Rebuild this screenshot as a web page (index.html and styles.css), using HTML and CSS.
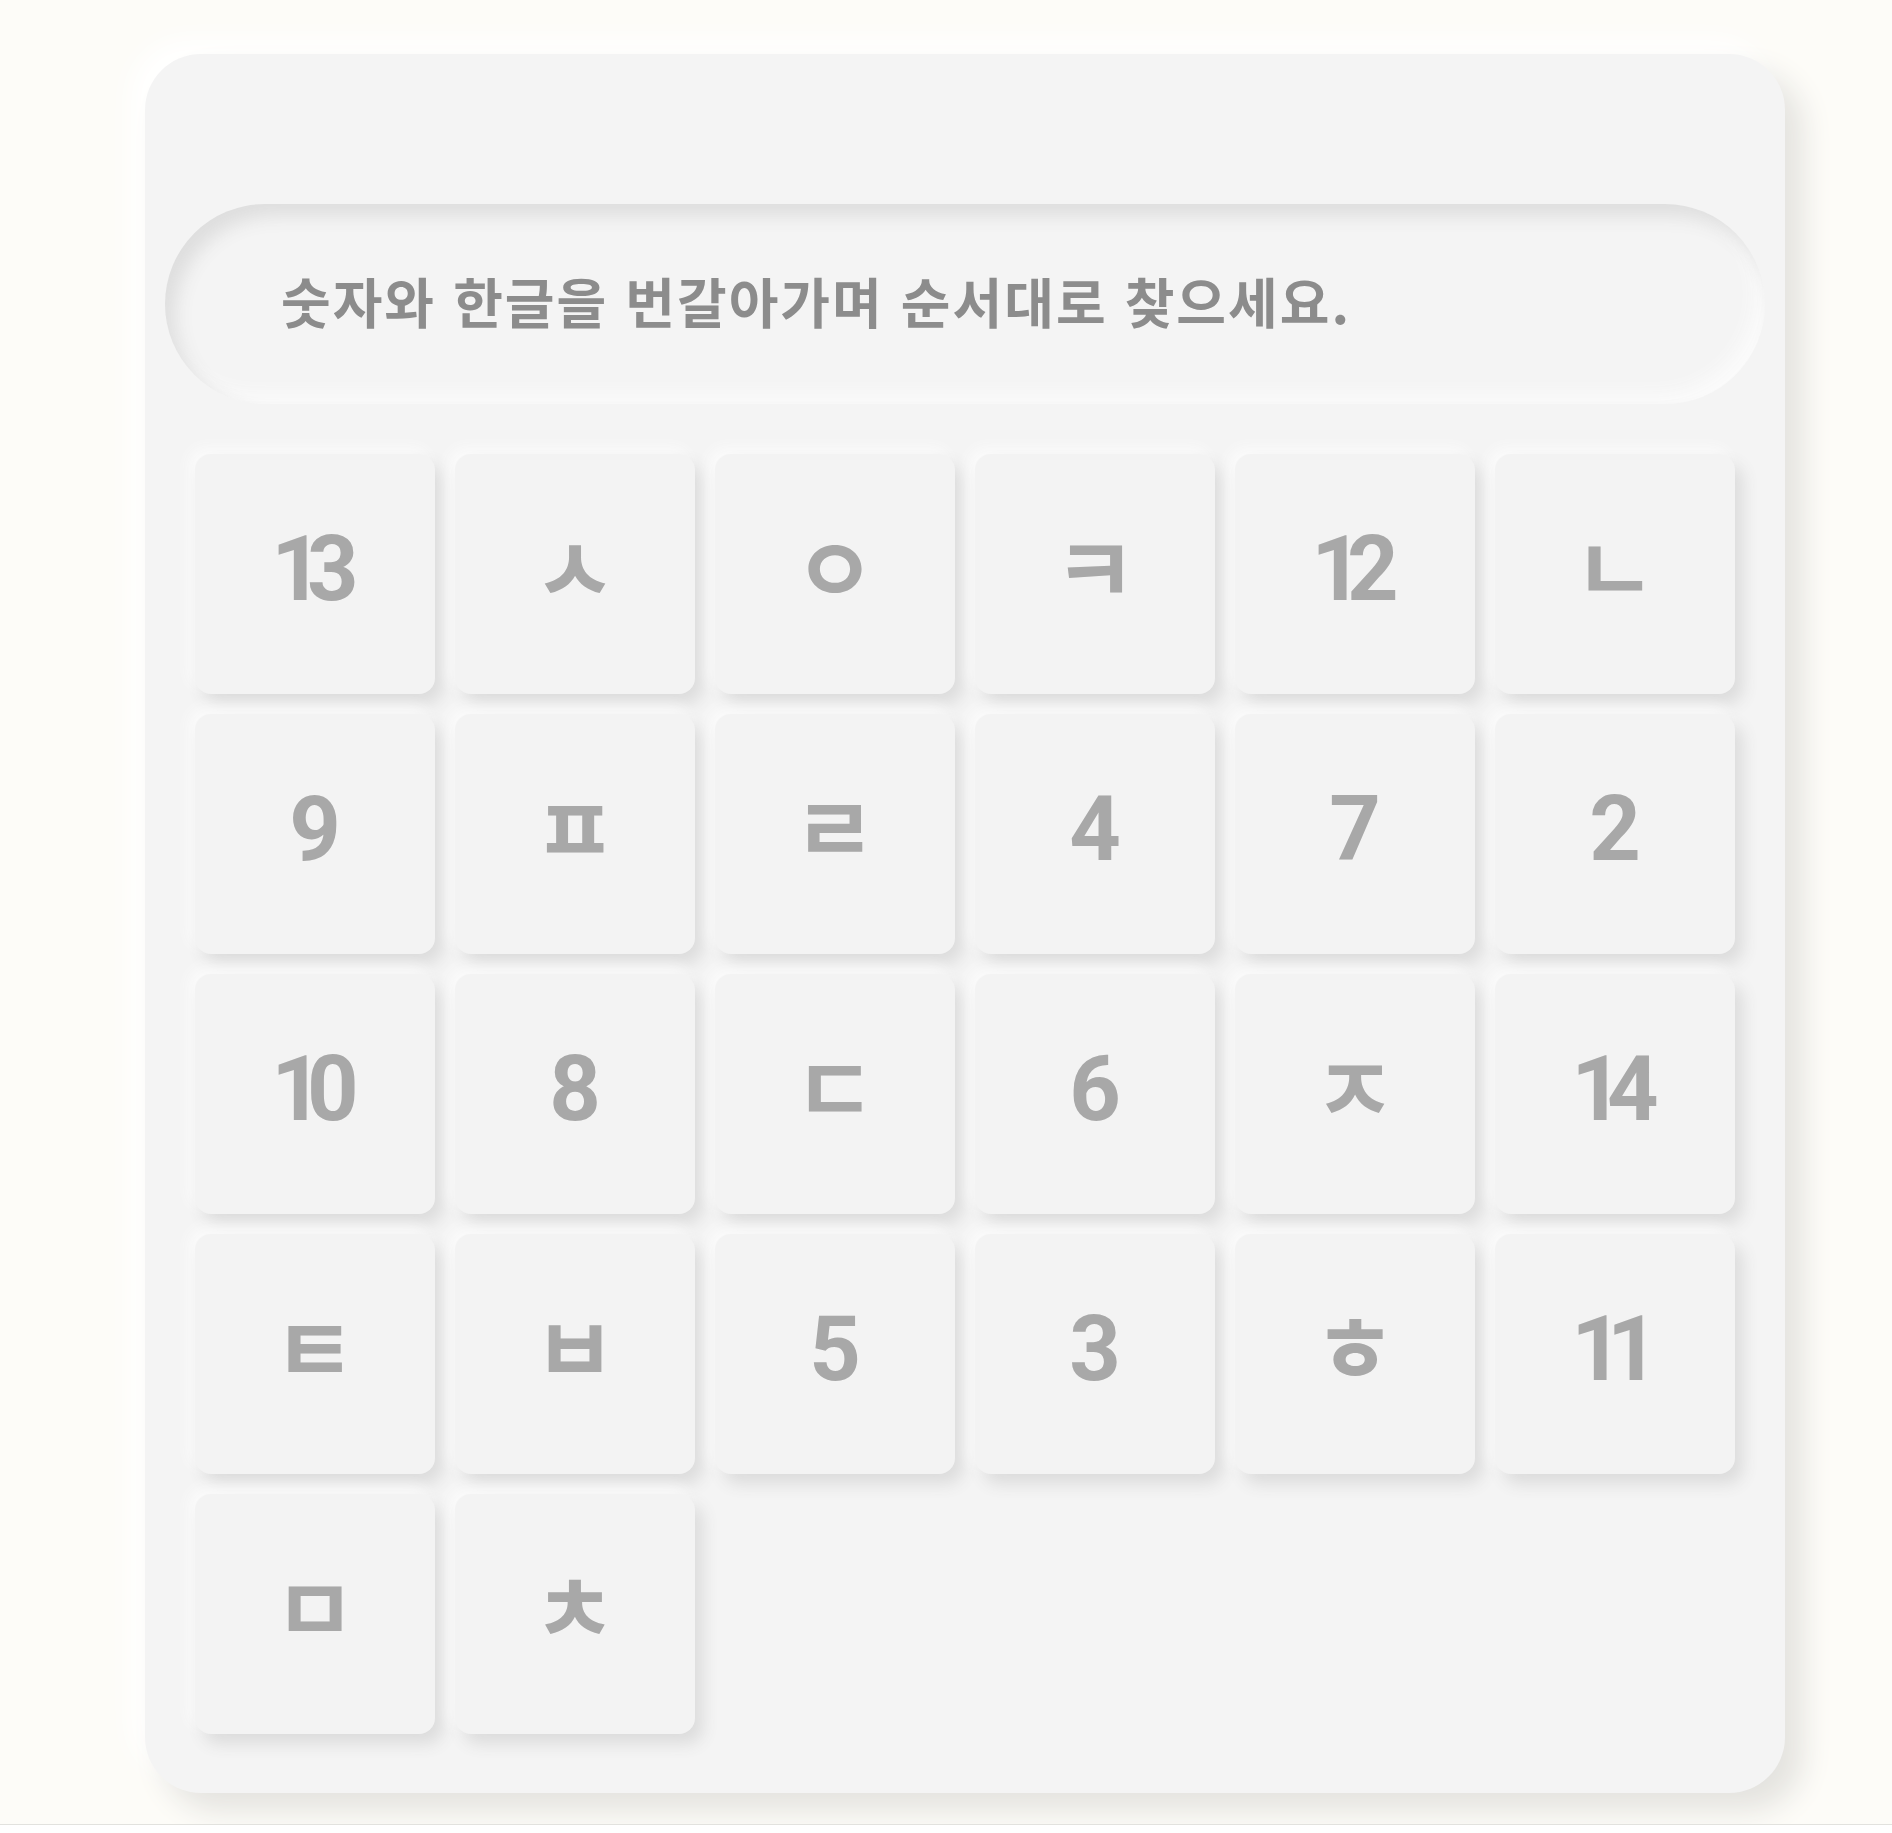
FILE: index.html
```html
<!DOCTYPE html>
<html lang="ko">

<head>
    <meta charset="UTF-8">
    <meta name="viewport" content="width=device-width, initial-scale=1.0">
    <title>숫자 한글 찾기</title>
    <link rel="stylesheet" href="styles.css">
</head>

<body>

    <div class="board">
        <!-- 안내 문구 -->
        <div class="guide">숫자와 한글을 번갈아가며 순서대로 찾으세요.</div>

        <!-- 타일 -->
        <div class="tiles">
            <button class="tile num">13</button>
            <button class="tile">ㅅ</button>
            <button class="tile">ㅇ</button>
            <button class="tile">ㅋ</button>
            <button class="tile num">12</button>
            <button class="tile">ㄴ</button>

            <button class="tile num">9</button>
            <button class="tile">ㅍ</button>
            <button class="tile">ㄹ</button>
            <button class="tile num">4</button>
            <button class="tile num">7</button>
            <button class="tile num">2</button>

            <button class="tile num">10</button>
            <button class="tile num">8</button>
            <button class="tile">ㄷ</button>
            <button class="tile num">6</button>
            <button class="tile">ㅈ</button>
            <button class="tile num">14</button>

            <button class="tile">ㅌ</button>
            <button class="tile">ㅂ</button>
            <button class="tile num">5</button>
            <button class="tile num">3</button>
            <button class="tile">ㅎ</button>
            <button class="tile num">11</button>

            <button class="tile">ㅁ</button>
            <button class="tile">ㅊ</button>
        </div>
    </div>

</body>

</html>
```

FILE: styles.css
```css
* {
    margin: 0;
    padding: 0;
    box-sizing: border-box;
}

html {
    background-color: #ffffff;
}

body {
    font-family: "Noto Sans CJK KR", "Noto Sans", sans-serif;
    background-color: #fdfcf8;
    padding: 54px 0 31px;
    border-bottom: 1px solid #e2e2de;
}

.board {
    width: 1640px;
    margin-left: 145px;
    padding: 150px 20px 59px;
    background-color: #f4f4f4;
    border-radius: 56px;
    box-shadow: 18px 18px 30px #e4e3df, -14px -14px 28px #ffffff;
}

.guide {
    height: 200px;
    display: flex;
    align-items: center;
    padding-left: 116px;
    padding-bottom: 8px;
    border-radius: 100px;
    box-shadow: inset 10px 12px 18px #dedede, inset -10px -10px 18px #fbfbfb;
    font-size: 54px;
    font-weight: 700;
    letter-spacing: 2px;
    color: #8c8c8c;
}

.tiles {
    display: grid;
    grid-template-columns: repeat(6, 240px);
    grid-auto-rows: 240px;
    gap: 20px;
    margin: 50px 30px 0;
}

.tile {
    display: flex;
    align-items: center;
    justify-content: center;
    padding-bottom: 20px;
    background-color: #f3f3f3;
    border: none;
    border-radius: 16px;
    box-shadow: 8px 10px 16px #dcdcdc, -6px -6px 14px #fbfbfb;
    font-family: inherit;
    font-size: 90px;
    font-weight: 700;
    color: #a8a8a8;
    cursor: pointer;
}

.tile.num {
    font-family: Roboto, "Noto Sans", sans-serif;
    font-size: 90px;
    letter-spacing: -16px;
    padding-right: 16px;
    padding-bottom: 10px;
}
```
